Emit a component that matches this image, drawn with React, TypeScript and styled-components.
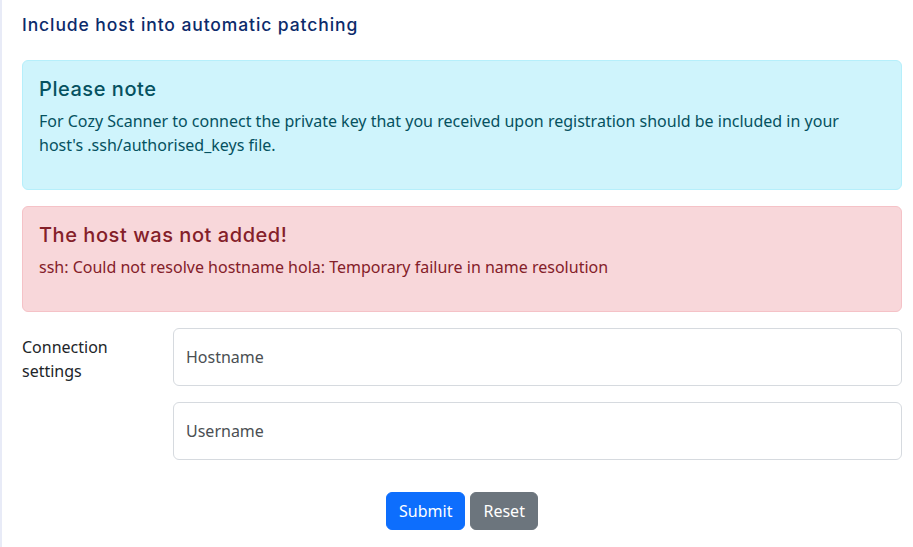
import React from 'react'
import styled, { createGlobalStyle } from 'styled-components'

const GlobalStyle = createGlobalStyle`
  * { box-sizing: border-box; }
  body {
    margin: 0;
    background: #ffffff;
    font-family: "Noto Sans", "Open Sans", sans-serif;
    color: #212529;
  }
`

const alertColors = {
  info: { bg: '#cff4fc', border: '#b6effb', text: '#055160' },
  danger: { bg: '#f8d7da', border: '#f5c2c7', text: '#842029' },
}

type Variant = keyof typeof alertColors

const App: React.FC = () => {
  return (
    <>
      <GlobalStyle />
      <Page>
        <Title>Include host into automatic patching</Title>

        <Alert $variant="info">
          <AlertHeading>Please note</AlertHeading>
          <AlertText>
            For Cozy Scanner to connect the private key that you received upon registration should be included in
            your host's .ssh/authorised_keys file.
          </AlertText>
        </Alert>

        <Alert $variant="danger">
          <AlertHeading>The host was not added!</AlertHeading>
          <AlertText>ssh: Could not resolve hostname hola: Temporary failure in name resolution</AlertText>
        </Alert>

        <FormRow>
          <FieldLabel>Connection settings</FieldLabel>
          <Fields>
            <Input type="text" placeholder="Hostname" />
            <Input type="text" placeholder="Username" />
          </Fields>
        </FormRow>

        <Actions>
          <Button $kind="primary">Submit</Button>
          <Button $kind="secondary">Reset</Button>
        </Actions>
      </Page>
    </>
  )
}

export default App

// Styled-components
const Page = styled.div`
  min-height: 547px;
  border-left: 2px solid #e8ebf7;
  padding: 12px 11px 0 20px;
`

const Title = styled.h2`
  margin: 0 0 22px;
  font-family: Inter, "Noto Sans", sans-serif;
  font-size: 17.5px;
  font-weight: 500;
  line-height: 26px;
  color: #0c2b6b;
  letter-spacing: 0.9px;
`

const Alert = styled.div<{ $variant: Variant }>`
  background: ${(p) => alertColors[p.$variant].bg};
  border: 1px solid ${(p) => alertColors[p.$variant].border};
  color: ${(p) => alertColors[p.$variant].text};
  border-radius: 6px;
  padding: 16px 16px 0;
  margin-bottom: 16px;
`

const AlertHeading = styled.h4`
  margin: 0 0 8px;
  font-family: Inter, "Noto Sans", sans-serif;
  font-size: 20px;
  font-weight: 500;
  line-height: 24px;
  letter-spacing: 0.55px;
`

const AlertText = styled.p`
  margin: 0;
  padding-bottom: 32px;
  padding-right: 24px;
  font-size: 16px;
  line-height: 24px;
`

const FormRow = styled.div`
  display: grid;
  grid-template-columns: 151px 1fr;
  margin-top: 1px;
`

const FieldLabel = styled.label`
  padding-top: 7px;
  padding-right: 40px;
  font-size: 16px;
  line-height: 24px;
  color: #212529;
`

const Fields = styled.div`
  display: flex;
  flex-direction: column;
  gap: 16px;
`

const Input = styled.input`
  height: 58px;
  width: 100%;
  padding: 0 12px;
  border: 1px solid #d6dadf;
  border-radius: 6px;
  font-family: "Noto Sans", "Open Sans", sans-serif;
  font-size: 16px;
  color: #212529;
  background: #fff;
  outline: none;
  &::placeholder {
    color: #4b4f53;
  }
`

const Actions = styled.div`
  display: flex;
  justify-content: center;
  gap: 5px;
  margin-top: 32px;
`

const Button = styled.button<{ $kind: 'primary' | 'secondary' }>`
  height: 38px;
  padding: 0 12px;
  border: 1px solid ${(p) => (p.$kind === 'primary' ? '#0d6efd' : '#6c757d')};
  background: ${(p) => (p.$kind === 'primary' ? '#0d6efd' : '#6c757d')};
  color: #fff;
  border-radius: 6px;
  font-family: "Noto Sans", "Open Sans", sans-serif;
  font-size: 16px;
  line-height: 24px;
`
